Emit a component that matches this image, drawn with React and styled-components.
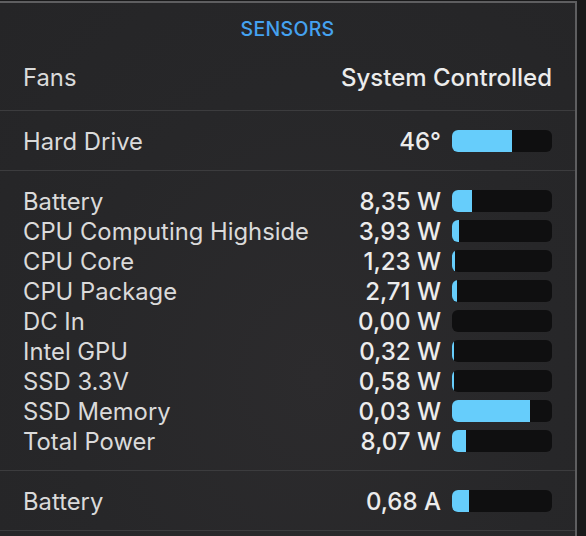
import React from 'react';
import styled, { createGlobalStyle } from 'styled-components';

const GlobalStyle = createGlobalStyle`
  html, body {
    margin: 0;
    padding: 0;
    background: #19191a;
  }
  body {
    font-family: Inter, "Liberation Sans", sans-serif;
    -webkit-font-smoothing: antialiased;
  }
`;

const POWER = [
  { name: 'Battery', value: '8,35 W', fill: 20 },
  { name: 'CPU Computing Highside', value: '3,93 W', fill: 7 },
  { name: 'CPU Core', value: '1,23 W', fill: 3 },
  { name: 'CPU Package', value: '2,71 W', fill: 5 },
  { name: 'DC In', value: '0,00 W', fill: 0 },
  { name: 'Intel GPU', value: '0,32 W', fill: 2 },
  { name: 'SSD 3.3V', value: '0,58 W', fill: 2 },
  { name: 'SSD Memory', value: '0,03 W', fill: 78 },
  { name: 'Total Power', value: '8,07 W', fill: 14 },
];

function SensorRow({ name, value, fill }) {
  return (
    <Row>
      <Label>{name}</Label>
      <Value>{value}</Value>
      <Track>
        <Fill style={{ width: `${fill}%` }} />
      </Track>
    </Row>
  );
}

function App() {
  return (
    <>
      <GlobalStyle />
      <Panel>
        <Header>
          <Title>SENSORS</Title>
          <Row>
            <Label>Fans</Label>
            <Value>System Controlled</Value>
          </Row>
        </Header>
        <Section>
          <SensorRow name="Hard Drive" value="46°" fill={60} />
        </Section>
        <Section>
          {POWER.map(item => (
            <SensorRow key={item.name} {...item} />
          ))}
        </Section>
        <Section>
          <SensorRow name="Battery" value="0,68 A" fill={17} />
        </Section>
      </Panel>
    </>
  );
}

export default App;

const Panel = styled.div`
  margin-top: 1px;
  width: 577px;
  height: 535px;
  box-sizing: border-box;
  border-top: 2px solid #5e5e60;
  border-right: 2px solid #5e5e60;
  background: radial-gradient(
    ellipse at 55% 70%,
    #2c2b2d 0%,
    #272729 55%,
    #252527 100%
  );
  display: flex;
  flex-direction: column;
`;

const Header = styled.div`
  display: flex;
  flex-direction: column;
  padding: 11px 0 18px;
  gap: 18px;
  border-bottom: 1px solid #3c3c3e;
`;

const Title = styled.div`
  height: 30px;
  line-height: 30px;
  text-align: center;
  font-size: 19.5px;
  font-weight: 500;
  letter-spacing: 0.3px;
  color: #45a2f0;
`;

const Section = styled.div`
  display: flex;
  flex-direction: column;
  padding: 15px 0 14px;
  border-bottom: 1px solid #3c3c3e;
`;

const Row = styled.div`
  display: flex;
  align-items: center;
  height: 30px;
  padding: 0 23px 0 23px;
`;

const Label = styled.span`
  flex: 1;
  font-size: 23.8px;
  font-weight: 400;
  color: #dadada;
  white-space: nowrap;
`;

const Value = styled.span`
  font-size: 24px;
  font-weight: 500;
  color: #ececec;
  white-space: nowrap;
`;

const Track = styled.div`
  margin-left: 11px;
  width: 100px;
  height: 22px;
  border-radius: 6px;
  background: #0f0f10;
  overflow: hidden;
`;

const Fill = styled.div`
  height: 100%;
  background: #66cdfb;
`;
